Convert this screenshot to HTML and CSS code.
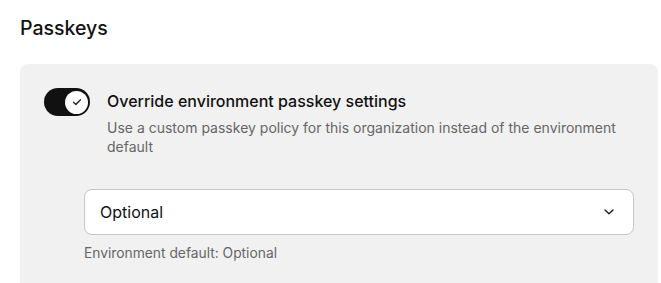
FILE: index.html
```html
<!DOCTYPE html>
<html lang="en">
<head>
<meta charset="utf-8">
<link rel="stylesheet" href="styles.css">
</head>
<body>
<h2 class="heading">Passkeys</h2>
<section class="card">
  <div class="row">
    <span class="toggle" role="switch" aria-checked="true">
      <span class="knob">
        <svg width="12" height="12" viewBox="0 0 12 12"><path d="M2.5 6.2l2.4 2.3 4.6-4.8" fill="none" stroke="#222" stroke-width="1.3" stroke-linecap="round" stroke-linejoin="round"/></svg>
      </span>
    </span>
    <div class="text">
      <div class="title">Override environment passkey settings</div>
      <div class="desc">Use a custom passkey policy for this organization instead of the environment default</div>
    </div>
  </div>
  <div class="field">
    <div class="select">
      <span>Optional</span>
      <svg class="chev" width="10" height="6" viewBox="0 0 10 6"><path d="M1 1l4 3.8L9 1" fill="none" stroke="#222" stroke-width="1.4" stroke-linecap="round" stroke-linejoin="round"/></svg>
    </div>
    <div class="hint">Environment default: Optional</div>
  </div>
</section>
</body>
</html>
```

FILE: styles.css
```css
* { box-sizing: border-box; }
html, body { margin: 0; background: #fff; }
body {
  padding: 16px 3px 0 20px;
  font-family: Inter, "Noto Sans", sans-serif;
  color: #111;
}
.heading {
  margin: 0 0 24px;
  font-size: 19.5px;
  line-height: 24px;
  font-weight: 500;
}
.card {
  background: #f1f1f1;
  border-radius: 8px;
  padding: 24px 24px 60px 24px;
}
.row {
  display: flex;
  align-items: flex-start;
  gap: 17px;
}
.toggle {
  flex: none;
  width: 46px;
  height: 28px;
  border-radius: 14px;
  background: #111;
  display: flex;
  align-items: center;
  justify-content: flex-end;
  padding-right: 2px;
}
.knob {
  width: 23px;
  height: 23px;
  border-radius: 50%;
  background: #fff;
  display: flex;
  align-items: center;
  justify-content: center;
}
.text { padding-top: 2px; }
.title {
  font-size: 16px;
  line-height: 22px;
  font-weight: 500;
  color: #111;
}
.desc {
  margin-top: 6px;
  font-size: 14px;
  line-height: 19px;
  color: #666;
}
.field {
  margin-top: 33px;
  padding-left: 40px;
}
.select {
  height: 46px;
  background: #fff;
  border: 1px solid #c8c8c8;
  border-radius: 8px;
  display: flex;
  align-items: center;
  justify-content: space-between;
  padding: 0 19px 0 15px;
  font-size: 16px;
  color: #111;
}
.chev { display: block; }
.hint {
  margin-top: 8px;
  font-size: 13.8px;
  line-height: 20px;
  color: #666;
}
```
